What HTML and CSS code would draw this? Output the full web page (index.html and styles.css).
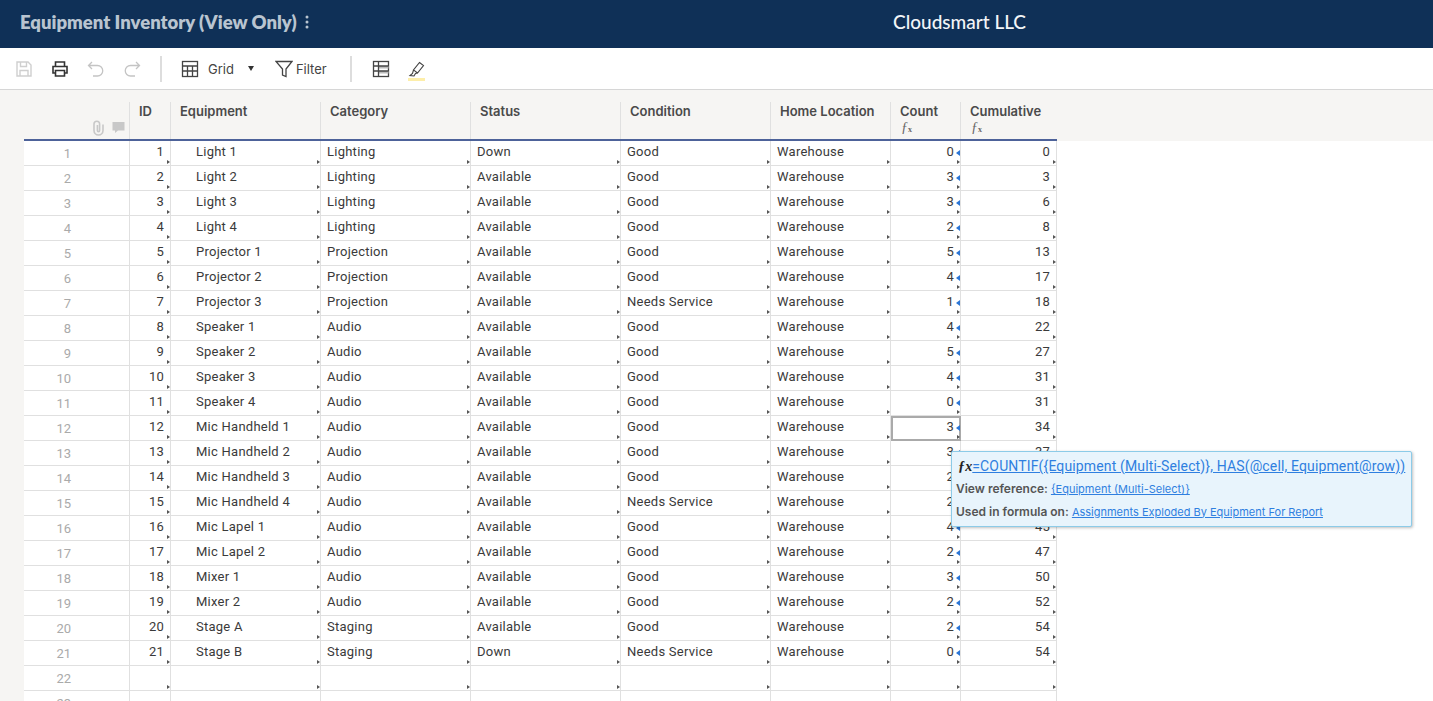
FILE: index.html
```html
<!DOCTYPE html>
<html lang="en">
<head>
<meta charset="utf-8">
<title>Equipment Inventory (View Only)</title>
<link rel="stylesheet" href="styles.css">
</head>
<body>
<header class="topbar">
  <div class="title">Equipment Inventory (View Only)<svg class="kebab" width="6" height="16" viewBox="0 0 6 16"><circle cx="3" cy="3" r="1.500"/><circle cx="3" cy="8" r="1.500"/><circle cx="3" cy="13" r="1.500"/></svg></div>
  <div class="company">Cloudsmart LLC</div>
</header>
<div class="toolbar">
  <svg class="ic first" width="18" height="18" viewBox="0 0 18 18" fill="none" stroke="#cfcfcf" stroke-width="1.4"><path d="M2 2h11l3 3v11H2z"/><path d="M5.500 2v4.500h6V2M5 16v-5.500h8V16"/></svg>
  <svg class="ic" width="18" height="18" viewBox="0 0 18 18" fill="none" stroke="#333" stroke-width="1.6"><path d="M4.500 6V2h9v4M4.500 13H2V6.500h14V13h-2.500"/><path d="M4.500 10.500h9V16h-9z"/></svg>
  <svg class="ic" width="18" height="18" viewBox="0 0 18 18" fill="none" stroke="#c4c4c4" stroke-width="1.3"><path d="M5 2 1.500 5.500 5 9M2 5.500h8.500a5 5 0 0 1 0 10.500H6"/></svg>
  <svg class="ic" width="18" height="18" viewBox="0 0 18 18" fill="none" stroke="#c4c4c4" stroke-width="1.3"><path d="M13 2l3.500 3.500L13 9M16 5.500H7.500a5 5 0 0 0 0 10.500H12"/></svg>
  <span class="sep"></span>
  <svg class="ic grid-ic" width="18" height="18" viewBox="0 0 18 18" fill="none" stroke="#444" stroke-width="1.300"><rect x="1.500" y="1.500" width="15" height="15"/><path d="M1.500 6h15M1.500 11h15M6.500 6v10.500M11.500 6v10.500"/></svg>
  <span class="tool-label">Grid</span>
  <span class="caret"></span>
  <svg class="filter-ic" width="18" height="18" viewBox="0 0 18 18" fill="none" stroke="#444" stroke-width="1.300"><path d="M1 1.500h16L11 9v7.500L7.500 15V9z"/></svg>
  <span class="tool-label">Filter</span>
  <span class="sep sep2"></span>
  <svg class="ic" width="18" height="18" viewBox="0 0 18 18" stroke="#444" stroke-width="1.300"><rect x="1.500" y="1.500" width="15" height="15" fill="none"/><path d="M6.500 6h10v2.500h-10zM6.500 11h10v2.500h-10z" fill="#bbb" stroke="none"/><path d="M1.500 6h15M1.500 11h15M6.500 1.500v15" fill="none"/></svg>
  <svg class="ic high" width="18" height="20" viewBox="0 0 18 20" fill="none"><path d="M11.500 1.500l4 3-6 7.500-4-3zM5.500 9l-1 3.500L2 14.500l4 .5 1.500-2.500 2-.5" stroke="#444" stroke-width="1.100"/><rect x="0" y="17" width="17" height="3" fill="#fdeeaa"/></svg>
</div>
<main class="sheet">
  <div class="headband">
  <div class="row head">
    <div class="hcell rownum"><svg width="13" height="16" viewBox="0 0 13 16" fill="none" stroke="#c8c8c8" stroke-width="1.600"><path d="M11 4.500v6a4.500 4.500 0 0 1-9 0V4a2.800 2.800 0 0 1 5.600 0v6.500a1.100 1.100 0 0 1-2.200 0V5"/></svg><svg width="13" height="14" viewBox="0 0 13 14" fill="#c8c8c8"><path d="M.5 2h12v8.500H6L3 13v-2.500H.5z"/></svg></div>
    <div class="hcell">ID</div>
    <div class="hcell">Equipment</div>
    <div class="hcell">Category</div>
    <div class="hcell">Status</div>
    <div class="hcell">Condition</div>
    <div class="hcell">Home Location</div>
    <div class="hcell">Count<i class="fx">ƒ<small>x</small></i></div>
    <div class="hcell last">Cumulative<i class="fx">ƒ<small>x</small></i></div>
  </div>
  </div>
  <div class="row"><div class="num">1</div><div class="c r m">1</div><div class="c e m">Light 1</div><div class="c m">Lighting</div><div class="c m">Down</div><div class="c m">Good</div><div class="c m">Warehouse</div><div class="c r f m">0</div><div class="c r m">0</div></div>
  <div class="row"><div class="num">2</div><div class="c r m">2</div><div class="c e m">Light 2</div><div class="c m">Lighting</div><div class="c m">Available</div><div class="c m">Good</div><div class="c m">Warehouse</div><div class="c r f m">3</div><div class="c r m">3</div></div>
  <div class="row"><div class="num">3</div><div class="c r m">3</div><div class="c e m">Light 3</div><div class="c m">Lighting</div><div class="c m">Available</div><div class="c m">Good</div><div class="c m">Warehouse</div><div class="c r f m">3</div><div class="c r m">6</div></div>
  <div class="row"><div class="num">4</div><div class="c r m">4</div><div class="c e m">Light 4</div><div class="c m">Lighting</div><div class="c m">Available</div><div class="c m">Good</div><div class="c m">Warehouse</div><div class="c r f m">2</div><div class="c r m">8</div></div>
  <div class="row"><div class="num">5</div><div class="c r m">5</div><div class="c e m">Projector 1</div><div class="c m">Projection</div><div class="c m">Available</div><div class="c m">Good</div><div class="c m">Warehouse</div><div class="c r f m">5</div><div class="c r m">13</div></div>
  <div class="row"><div class="num">6</div><div class="c r m">6</div><div class="c e m">Projector 2</div><div class="c m">Projection</div><div class="c m">Available</div><div class="c m">Good</div><div class="c m">Warehouse</div><div class="c r f m">4</div><div class="c r m">17</div></div>
  <div class="row"><div class="num">7</div><div class="c r m">7</div><div class="c e m">Projector 3</div><div class="c m">Projection</div><div class="c m">Available</div><div class="c m">Needs Service</div><div class="c m">Warehouse</div><div class="c r f m">1</div><div class="c r m">18</div></div>
  <div class="row"><div class="num">8</div><div class="c r m">8</div><div class="c e m">Speaker 1</div><div class="c m">Audio</div><div class="c m">Available</div><div class="c m">Good</div><div class="c m">Warehouse</div><div class="c r f m">4</div><div class="c r m">22</div></div>
  <div class="row"><div class="num">9</div><div class="c r m">9</div><div class="c e m">Speaker 2</div><div class="c m">Audio</div><div class="c m">Available</div><div class="c m">Good</div><div class="c m">Warehouse</div><div class="c r f m">5</div><div class="c r m">27</div></div>
  <div class="row"><div class="num">10</div><div class="c r m">10</div><div class="c e m">Speaker 3</div><div class="c m">Audio</div><div class="c m">Available</div><div class="c m">Good</div><div class="c m">Warehouse</div><div class="c r f m">4</div><div class="c r m">31</div></div>
  <div class="row"><div class="num">11</div><div class="c r m">11</div><div class="c e m">Speaker 4</div><div class="c m">Audio</div><div class="c m">Available</div><div class="c m">Good</div><div class="c m">Warehouse</div><div class="c r f m">0</div><div class="c r m">31</div></div>
  <div class="row"><div class="num">12</div><div class="c r m">12</div><div class="c e m">Mic Handheld 1</div><div class="c m">Audio</div><div class="c m">Available</div><div class="c m">Good</div><div class="c m">Warehouse</div><div class="c r f m sel">3</div><div class="c r m">34</div></div>
  <div class="row"><div class="num">13</div><div class="c r m">13</div><div class="c e m">Mic Handheld 2</div><div class="c m">Audio</div><div class="c m">Available</div><div class="c m">Good</div><div class="c m">Warehouse</div><div class="c r f m">3</div><div class="c r m">37</div></div>
  <div class="row"><div class="num">14</div><div class="c r m">14</div><div class="c e m">Mic Handheld 3</div><div class="c m">Audio</div><div class="c m">Available</div><div class="c m">Good</div><div class="c m">Warehouse</div><div class="c r f m">2</div><div class="c r m">39</div></div>
  <div class="row"><div class="num">15</div><div class="c r m">15</div><div class="c e m">Mic Handheld 4</div><div class="c m">Audio</div><div class="c m">Available</div><div class="c m">Needs Service</div><div class="c m">Warehouse</div><div class="c r f m">2</div><div class="c r m">41</div></div>
  <div class="row"><div class="num">16</div><div class="c r m">16</div><div class="c e m">Mic Lapel 1</div><div class="c m">Audio</div><div class="c m">Available</div><div class="c m">Good</div><div class="c m">Warehouse</div><div class="c r f m">4</div><div class="c r m">45</div></div>
  <div class="row"><div class="num">17</div><div class="c r m">17</div><div class="c e m">Mic Lapel 2</div><div class="c m">Audio</div><div class="c m">Available</div><div class="c m">Good</div><div class="c m">Warehouse</div><div class="c r f m">2</div><div class="c r m">47</div></div>
  <div class="row"><div class="num">18</div><div class="c r m">18</div><div class="c e m">Mixer 1</div><div class="c m">Audio</div><div class="c m">Available</div><div class="c m">Good</div><div class="c m">Warehouse</div><div class="c r f m">3</div><div class="c r m">50</div></div>
  <div class="row"><div class="num">19</div><div class="c r m">19</div><div class="c e m">Mixer 2</div><div class="c m">Audio</div><div class="c m">Available</div><div class="c m">Good</div><div class="c m">Warehouse</div><div class="c r f m">2</div><div class="c r m">52</div></div>
  <div class="row"><div class="num">20</div><div class="c r m">20</div><div class="c e m">Stage A</div><div class="c m">Staging</div><div class="c m">Available</div><div class="c m">Good</div><div class="c m">Warehouse</div><div class="c r f m">2</div><div class="c r m">54</div></div>
  <div class="row"><div class="num">21</div><div class="c r m">21</div><div class="c e m">Stage B</div><div class="c m">Staging</div><div class="c m">Down</div><div class="c m">Needs Service</div><div class="c m">Warehouse</div><div class="c r f m">0</div><div class="c r m">54</div></div>
  <div class="row"><div class="num">22</div><div class="c m"></div><div class="c m"></div><div class="c m"></div><div class="c m"></div><div class="c m"></div><div class="c m"></div><div class="c m"></div><div class="c m"></div></div>
  <div class="row"><div class="num">23</div><div class="c m"></div><div class="c m"></div><div class="c m"></div><div class="c m"></div><div class="c m"></div><div class="c m"></div><div class="c m"></div><div class="c m"></div></div>
  <aside class="tip">
    <div class="tip-formula"><i class="tip-fx">ƒx</i><a href="#">=COUNTIF({Equipment (Multi-Select)}, HAS(@cell, Equipment@row))</a></div>
    <div class="tip-line"><b>View reference:</b> <a href="#">{Equipment (Multi-Select)}</a></div>
    <div class="tip-line"><b>Used in formula on:</b> <a href="#">Assignments Exploded By Equipment For Report</a></div>
  </aside>
</main>
</body>
</html>
```
FILE: styles.css
```css
* { box-sizing: border-box; }
html, body { margin: 0; height: 701px; overflow: hidden; background: #fff; }
body { font-family: "Roboto", "Liberation Sans", sans-serif; color: #333; }

.topbar { height: 48px; background: #0f3057; display: flex; align-items: center; padding: 0 0 6px 20px; }
.title { width: 873px; flex: none; font-family: "Lato", sans-serif; font-weight: 800; font-size: 18.500px; color: #b9c4d0; display: flex; align-items: center; padding-top: 2px; }
.kebab { margin-left: 7px; fill: #b9c4d0; }
.company { font-family: "Lato", sans-serif; font-weight: 500; font-size: 19px; color: #f2f5f8; }

.toolbar { height: 42px; border-bottom: 1px solid #d6d6d6; display: flex; align-items: center; padding-left: 15px; }
.ic { margin-right: 18px; flex: none; }
.sep { width: 2px; height: 26px; background: #ddd; margin: 0 19px 0 1px; }
.sep2 { margin: 0 20px 0 23px; }
.grid-ic { margin-right: 9px; }
.tool-label { font-family: "Inter", sans-serif; font-size: 13px; color: #444; }
.caret { width: 0; height: 0; border: 3.500px solid transparent; border-top: 5px solid #333; border-bottom: 0; margin: 0 21px 0 14px; }
.filter-ic { margin-right: 3px; }
.high { margin-top: 4px; }

.sheet { position: relative; height: 611px; padding-left: 24px; background: linear-gradient(#f6f5f3, #f6f5f3) left / 24px 100% no-repeat; }
.headband { height: 51px; margin-left: -24px; padding-left: 24px; background: #f6f5f3; }
.row { display: grid; grid-template-columns: 106px 41px 150px 150px 150px 150px 120px 70px 96px; width: 1033px; height: 25px; }
.row.head { height: 51px; padding-top: 12px; border-bottom: 2px solid #4d6299; width: 1033px; }
.hcell { border-right: 1px solid #e0e0e0; padding: 1px 0 0 9px; font-family: "Inter", sans-serif; font-weight: 600; font-size: 13px; line-height: 16px; color: #4a4a4a; display: flex; flex-direction: column; }
.hcell.rownum { padding: 18px 4px 0 0; flex-direction: row; justify-content: flex-end; gap: 7px; }
.hcell.last { border-right: 0; }
.fx { font-family: "Liberation Serif", serif; font-style: italic; font-weight: 400; font-size: 14px; line-height: 12px; color: #666; margin-top: 3px; padding-left: 1px; }
.fx small { font-size: 8px; font-weight: 700; font-style: normal; }

.num { font-size: 13px; line-height: 22px; color: #aaa; text-align: right; padding: 2px 58px 0 0; border-right: 1px solid #e0e0e0; border-bottom: 1px solid #e0e0e0; background: #fff; }
.c { position: relative; font-size: 13px; line-height: 21px; letter-spacing: .25px; color: #3a3a3a; padding: 0 3px 0 6px; border-right: 1px solid #e0e0e0; border-bottom: 1px solid #e0e0e0; background: #fff; white-space: nowrap; }
.r { text-align: right; padding-right: 6px; }
.e { padding-left: 25px; }
.m::after { content: ""; position: absolute; right: 0; bottom: 1px; width: 0; height: 0; border: 2px solid transparent; border-left: 3px solid #555; border-right: 0; }
.f::before { content: ""; position: absolute; right: 0; top: 9px; width: 0; height: 0; border: 3px solid transparent; border-right: 4px solid #2a75d6; border-left: 0; }
.sel { outline: 2px solid #aaa; outline-offset: -2px; }

.tip { position: absolute; left: 951px; top: 361px; width: 461px; height: 76px; background: #e8f4fc; border: 1px solid #8ccbe8; border-radius: 2px; box-shadow: 1px 1px 3px rgba(0,0,0,.25); padding: 3px 4px; font-family: "Inter", sans-serif; font-size: 11px; color: #555; white-space: nowrap; }
.tip a { color: #2f7fe0; text-decoration: underline; }
.tip-formula { font-size: 14px; line-height: 23px; font-family: "Roboto", sans-serif; letter-spacing: .14px; }
.tip-fx { font-family: "Liberation Serif", serif; font-weight: 700; font-style: italic; font-size: 14px; color: #222; padding-left: 2px; }
.tip-line { line-height: 22.500px; }
.tip-line b { font-weight: 600; font-size: 12px; color: #555; }
```
